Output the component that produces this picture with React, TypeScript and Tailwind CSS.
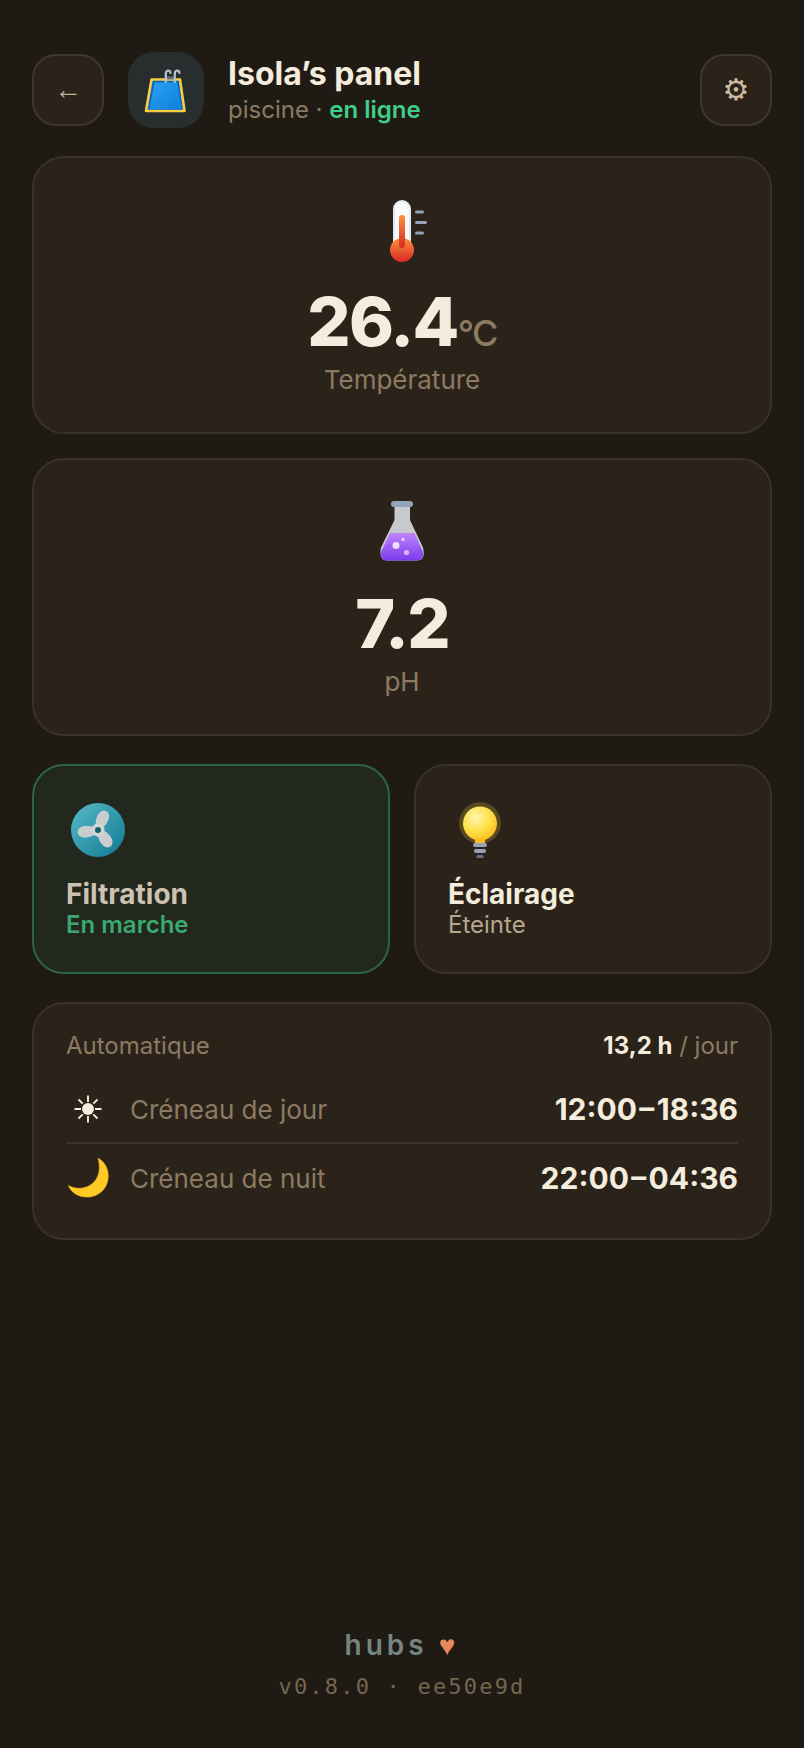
import type { ReactNode } from "react";

const PoolIcon = () => (
  <svg width="48" height="48" viewBox="0 0 48 48" aria-hidden="true">
    <defs>
      <linearGradient id="water" x1="0" y1="0" x2="1" y2="1">
        <stop offset="0" stopColor="#2aa1f6" />
        <stop offset="1" stopColor="#0f80dd" />
      </linearGradient>
    </defs>
    <path d="M9.500 13.500h28.500l4.500 31.500h-38.500z" fill="#0869bd" stroke="#fccb45" strokeWidth="2.600" strokeLinejoin="round" />
    <path d="M12.500 16.500h22.500l4.500 27h-32z" fill="url(#water)" />
    <path d="M24.500 10.500h8v3h-8z" fill="#66727d" />
    <path d="M23.800 16V8Q23.800 4.500 26.500 4.500Q28.500 5 28.500 7M32.800 16V8Q32.800 4.500 35.500 4.500Q37.500 5 37.500 7" fill="none" stroke="#b3c4d2" strokeWidth="2.200" strokeLinecap="round" />
  </svg>
);

const ThermometerIcon = () => (
  <svg width="72" height="72" viewBox="0 0 72 72" aria-hidden="true">
    <defs>
      <linearGradient id="heat" x1="0" y1="0" x2="0" y2="1">
        <stop offset="0" stopColor="#fb923c" />
        <stop offset="1" stopColor="#dc2626" />
      </linearGradient>
    </defs>
    <rect x="28" y="7" width="16" height="48" rx="8" fill="#f8fafc" stroke="#e2e8f0" strokeWidth="2" />
    <circle cx="36" cy="56" r="12" fill="url(#heat)" />
    <rect x="33" y="21" width="6" height="33" rx="3" fill="url(#heat)" />
    <path d="M50.500 18h6M50.500 28.500h9M50.500 39h6" stroke="#94a3b8" strokeWidth="3" strokeLinecap="round" />
  </svg>
);

const FlaskIcon = () => (
  <svg width="72" height="72" viewBox="0 0 72 72" aria-hidden="true">
    <defs>
      <linearGradient id="acid" x1="0" y1="0" x2="0" y2="1">
        <stop offset="0" stopColor="#c084fc" />
        <stop offset="1" stopColor="#7c3aed" />
      </linearGradient>
    </defs>
    <path d="M28.500 9H44v15l13 27.500Q60 64.500 51 64.500H21Q12.500 64.500 15 51.500L28.500 24z" fill="#c7c9cc" />
    <path d="M24 37h24.500l8.500 19q1 8.500-6 8.500H21q-7 0-6-8.500z" fill="url(#acid)" />
    <rect x="25" y="5" width="22" height="6" rx="3" fill="#94a3b8" />
    <g fill="#fff">
      <circle cx="30" cy="49.500" r="3.500" opacity=".8" />
      <circle cx="37" cy="43.500" r="1.800" opacity=".6" />
      <circle cx="40.500" cy="56.500" r="2.600" opacity=".6" />
    </g>
  </svg>
);

const FanIcon = () => (
  <svg width="64" height="64" viewBox="0 0 64 64" aria-hidden="true">
    <defs>
      <linearGradient id="fan" x1="0" y1="0" x2="1" y2="1">
        <stop offset="0" stopColor="#57bac9" />
        <stop offset="1" stopColor="#107990" />
      </linearGradient>
    </defs>
    <circle cx="32" cy="32" r="27" fill="url(#fan)" />
    <g fill="#c9cdcf">
      <path d="M29 29.500C22 26.500 11.500 27.500 11.500 34C12 41.500 24 41 30 35.500z" />
      <path d="M29 29.500C22 26.500 11.500 27.500 11.500 34C12 41.500 24 41 30 35.500z" transform="rotate(120 32 32)" />
      <path d="M29 29.500C22 26.500 11.500 27.500 11.500 34C12 41.500 24 41 30 35.500z" transform="rotate(240 32 32)" />
    </g>
    <circle cx="32" cy="32" r="6.500" fill="#d2d4d5" />
    <circle cx="32" cy="32" r="3" fill="#155e6f" />
  </svg>
);

const BulbIcon = () => (
  <svg width="64" height="64" viewBox="0 0 64 64" aria-hidden="true">
    <defs>
      <radialGradient id="glow" cx=".38" cy=".32" r=".7">
        <stop offset="0" stopColor="#fef6b0" />
        <stop offset=".6" stopColor="#fde047" />
        <stop offset="1" stopColor="#fbbf24" />
      </radialGradient>
    </defs>
    <circle cx="32" cy="25" r="21" fill="#564a20" />
    <path d="M26 39h12q-1 2-1 6H27q0-4-1-6z" fill="#fbbf24" />
    <circle cx="32" cy="25.500" r="17" fill="url(#glow)" />
    <path d="M27 40h10v5H27z" fill="#fbbf24" />
    <rect x="25" y="45" width="14" height="4" rx="2" fill="#94a3b8" />
    <rect x="26" y="51" width="12" height="4" rx="2" fill="#94a3b8" />
    <rect x="28.500" y="57" width="7" height="3" rx="1.500" fill="#64748b" />
  </svg>
);

const SunIcon = () => (
  <svg width="44" height="44" viewBox="0 0 44 44" aria-hidden="true">
    <circle cx="22" cy="22" r="6" fill="#f4ecdc" />
    <path d="M22 8.500v6.500M22 29v6.500M8.500 22h6.500M29 22h6.500M12.500 12.500l4.200 4.200M27.300 27.300l4.200 4.200M31.500 12.500l-4.200 4.200M16.700 27.300l-4.200 4.200" stroke="#f4ecdc" strokeWidth="1.900" />
  </svg>
);

const MoonIcon = () => (
  <svg width="44" height="44" viewBox="0 0 44 44" aria-hidden="true">
    <path d="M32 2C46 10 45 30 33 37.500C21 45.500 5 39 2.500 29.500C8 33 20 34.500 28 26C34.500 19 34 9.500 32 2z" fill="#ffc928" stroke="#f5b417" strokeWidth=".6" />
  </svg>
);

interface MetricCardProps {
  icon: ReactNode;
  value: string;
  unit?: string;
  label: string;
}

const MetricCard = ({ icon, value, unit, label }: MetricCardProps) => (
  <div className="flex flex-col items-center rounded-4xl border-2 border-[#3a3128] bg-[#2b231a] py-9">
    {icon}
    <div className="mt-5 flex items-baseline text-[68px] leading-[70px] font-extrabold tracking-tight">
      {value}
      {unit && <span className="text-4xl font-medium text-[#8c7b62]">{unit}</span>}
    </div>
    <div className="mt-2 text-[26px] leading-8 text-[#8c7b62]">{label}</div>
  </div>
);

interface SlotRowProps {
  icon: ReactNode;
  label: string;
  from: string;
  to: string;
}

const SlotRow = ({ icon, label, from, to }: SlotRowProps) => (
  <div className="flex h-17 items-center border-[#3a3128] not-last:border-b-2">
    {icon}
    <span className="ml-5 text-[26px] text-[#8c7b62]">{label}</span>
    <span className="ml-auto text-[30px] font-bold">
      {from}&#8202;–&#8202;{to}
    </span>
  </div>
);

const App = () => {
  return (
    <div className="flex min-h-screen flex-col bg-[#1f1a14] px-8 pt-13 pb-10 font-[Inter,sans-serif] text-[#f4ecdc]">
      <header className="flex items-center">
        <button
          aria-label="Retour"
          className="size-18 rounded-3xl border-2 border-[#40362b] bg-[#2b231a] font-['Liberation_Sans',sans-serif] text-[28px] text-[#bfae94]"
        >
          ←
        </button>
        <div className="ml-6 flex size-19 items-center justify-center rounded-[26px] bg-[#282d2e]">
          <PoolIcon />
        </div>
        <div className="ml-6 pt-1">
          <h1 className="text-[32px] leading-9 font-bold">Isola’s panel</h1>
          <p className="text-2xl leading-9 text-[#8c7b62]">
            piscine · <span className="font-semibold text-[#40ce86]">en ligne</span>
          </p>
        </div>
        <button
          aria-label="Réglages"
          className="ml-auto size-18 rounded-3xl border-2 border-[#40362b] bg-[#2b231a] font-['DejaVu_Sans',sans-serif] text-3xl text-[#cbbba3]"
        >
          ⚙
        </button>
      </header>

      <main className="mt-7 flex flex-col gap-7">
        <section className="flex flex-col gap-6">
          <MetricCard icon={<ThermometerIcon />} value="26.4" unit="°C" label="Température" />
          <MetricCard icon={<FlaskIcon />} value="7.2" label="pH" />
        </section>

        <section className="grid grid-cols-2 gap-6">
          <button className="rounded-4xl border-2 border-[#2c6546] bg-[#22281e] p-8 text-left">
            <FanIcon />
            <span className="mt-4 block text-[28px] leading-8 font-bold text-[#cdc1b0]">Filtration</span>
            <span className="block text-2xl leading-[30px] font-semibold text-[#3ba96f]">En marche</span>
          </button>
          <button className="rounded-4xl border-2 border-[#3a3128] bg-[#2b231a] p-8 text-left">
            <BulbIcon />
            <span className="mt-4 block text-[28px] leading-8 font-bold">Éclairage</span>
            <span className="block text-2xl leading-[30px] text-[#b5a68d]">Éteinte</span>
          </button>
        </section>

        <section className="rounded-4xl border-2 border-[#3a3128] bg-[#2b231a] px-8 pt-6 pb-[26px]">
          <div className="mb-3 flex items-center justify-between text-2xl leading-9 text-[#8c7b62]">
            <span>Automatique</span>
            <span>
              <strong className="font-bold text-[#f4ecdc]">13,2 h</strong> / jour
            </span>
          </div>
          <SlotRow icon={<SunIcon />} label="Créneau de jour" from="12:00" to="18:36" />
          <SlotRow icon={<MoonIcon />} label="Créneau de nuit" from="22:00" to="04:36" />
        </section>
      </main>

      <footer className="mt-auto text-center">
        <div className="text-[28px] leading-10 font-semibold tracking-[4px] text-[#778580]">
          hubs <span className="font-['Liberation_Sans',sans-serif] font-normal text-[#e8895b]">♥</span>
        </div>
        <div className="font-['DejaVu_Sans_Mono',monospace] text-[22px] leading-[42px] tracking-widest text-[#75664f]">
          v0.8.0 · ee50e9d
        </div>
      </footer>
    </div>
  );
};

export default App;
